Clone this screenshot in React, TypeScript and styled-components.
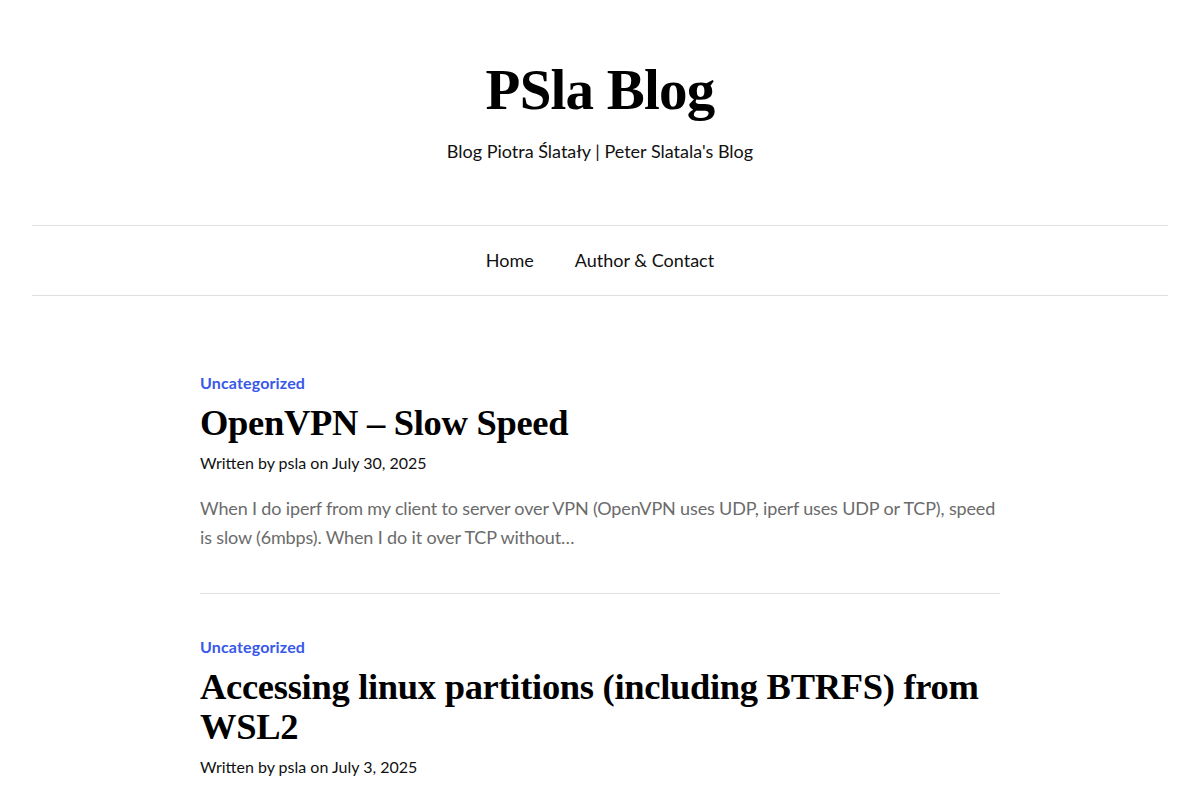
import React from "react";
import styled, { createGlobalStyle } from "styled-components";

const Global = createGlobalStyle`
  html, body { margin: 0; padding: 0; background: #fff; }
  body { font-family: Lato, "Noto Sans", sans-serif; color: #111; }
  * { box-sizing: border-box; }
`;

const Header = styled.header`
  padding-top: 56px;
  text-align: center;
`;

const SiteTitle = styled.h1`
  margin: 0;
  font-family: "Liberation Serif", "DejaVu Serif", serif;
  font-weight: 700;
  font-size: 57px;
  line-height: 67px;
  letter-spacing: -0.8px;
  color: #000;
`;

const Tagline = styled.p`
  margin: 15px 0 0;
  font-size: 18px;
  line-height: 27px;
  color: #111;
`;

const Nav = styled.nav`
  margin: 60px 32px 0;
  height: 71px;
  border-top: 1px solid #e0e0e0;
  border-bottom: 1px solid #e0e0e0;
  display: flex;
  justify-content: center;
  align-items: center;
  gap: 41px;
`;

const NavLink = styled.a`
  font-size: 18px;
  line-height: 27px;
  color: #111;
  text-decoration: none;
`;

const Main = styled.main`
  width: 800px;
  margin: 0 auto;
  padding-top: 75px;
`;

const Post = styled.article<{ $divider?: boolean }>`
  padding-bottom: ${(p) => (p.$divider ? "41px" : "0")};
  margin-bottom: ${(p) => (p.$divider ? "41px" : "0")};
  border-bottom: ${(p) => (p.$divider ? "1px solid #e0e0e0" : "none")};
`;

const Category = styled.a`
  display: block;
  font-size: 16px;
  line-height: 24px;
  font-weight: 700;
  letter-spacing: 0.15px;
  color: #3858e9;
  text-decoration: none;
`;

const PostTitle = styled.h2`
  margin: 8px 0 0;
  font-family: "Liberation Serif", "DejaVu Serif", serif;
  font-weight: 700;
  font-size: 36.5px;
  line-height: 40px;
  letter-spacing: -0.3px;
  color: #000;
`;

const Meta = styled.div`
  margin-top: 8px;
  font-size: 16px;
  line-height: 24px;
  color: #111;
`;

const Excerpt = styled.p`
  margin: 19px 0 0;
  font-size: 18px;
  line-height: 29px;
  letter-spacing: -0.15px;
  color: #6b6b6b;
`;

export default function App() {
  return (
    <>
      <Global />
      <Header>
        <SiteTitle>PSla Blog</SiteTitle>
        <Tagline>Blog Piotra Ślatały | Peter Slatala's Blog</Tagline>
      </Header>
      <Nav>
        <NavLink href="#">Home</NavLink>
        <NavLink href="#">Author &amp; Contact</NavLink>
      </Nav>
      <Main>
        <Post $divider>
          <Category href="#">Uncategorized</Category>
          <PostTitle>OpenVPN – Slow Speed</PostTitle>
          <Meta>Written by psla on July 30, 2025</Meta>
          <Excerpt>
            When I do iperf from my client to server over VPN (OpenVPN uses UDP, iperf uses UDP or
            TCP), speed is slow (6mbps). When I do it over TCP without…
          </Excerpt>
        </Post>
        <Post>
          <Category href="#">Uncategorized</Category>
          <PostTitle>Accessing linux partitions (including BTRFS) from WSL2</PostTitle>
          <Meta>Written by psla on July 3, 2025</Meta>
        </Post>
      </Main>
    </>
  );
}
